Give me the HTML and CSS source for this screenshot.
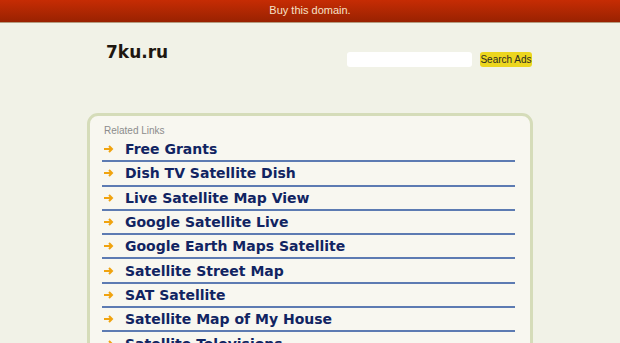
FILE: index.html
```html
<!DOCTYPE html>
<html lang="ru">

<head>
  <meta charset="UTF-8">
  <title>7ku.ru</title>
  <link rel="stylesheet" href="styles.css">
</head>

<body>
  <div class="topbar">Buy this domain.</div>

  <div class="header">
    <div class="logo">7ku.ru</div>
    <form class="search">
      <input type="text" class="search-input">
      <button type="button" class="search-button">Search Ads</button>
    </form>
  </div>

  <div class="links-box">
    <div class="links-title">Related Links</div>
    <ul class="links">
      <li><svg class="arrow" width="10" height="8" viewBox="0 0 10 8"><path d="M0 4h8M5 1l3 3-3 3" fill="none" stroke="#f0a30f" stroke-width="2"/></svg><a href="#">Free Grants</a></li>
      <li><svg class="arrow" width="10" height="8" viewBox="0 0 10 8"><path d="M0 4h8M5 1l3 3-3 3" fill="none" stroke="#f0a30f" stroke-width="2"/></svg><a href="#">Dish TV Satellite Dish</a></li>
      <li><svg class="arrow" width="10" height="8" viewBox="0 0 10 8"><path d="M0 4h8M5 1l3 3-3 3" fill="none" stroke="#f0a30f" stroke-width="2"/></svg><a href="#">Live Satellite Map View</a></li>
      <li><svg class="arrow" width="10" height="8" viewBox="0 0 10 8"><path d="M0 4h8M5 1l3 3-3 3" fill="none" stroke="#f0a30f" stroke-width="2"/></svg><a href="#">Google Satellite Live</a></li>
      <li><svg class="arrow" width="10" height="8" viewBox="0 0 10 8"><path d="M0 4h8M5 1l3 3-3 3" fill="none" stroke="#f0a30f" stroke-width="2"/></svg><a href="#">Google Earth Maps Satellite</a></li>
      <li><svg class="arrow" width="10" height="8" viewBox="0 0 10 8"><path d="M0 4h8M5 1l3 3-3 3" fill="none" stroke="#f0a30f" stroke-width="2"/></svg><a href="#">Satellite Street Map</a></li>
      <li><svg class="arrow" width="10" height="8" viewBox="0 0 10 8"><path d="M0 4h8M5 1l3 3-3 3" fill="none" stroke="#f0a30f" stroke-width="2"/></svg><a href="#">SAT Satellite</a></li>
      <li><svg class="arrow" width="10" height="8" viewBox="0 0 10 8"><path d="M0 4h8M5 1l3 3-3 3" fill="none" stroke="#f0a30f" stroke-width="2"/></svg><a href="#">Satellite Map of My House</a></li>
      <li><svg class="arrow" width="10" height="8" viewBox="0 0 10 8"><path d="M0 4h8M5 1l3 3-3 3" fill="none" stroke="#f0a30f" stroke-width="2"/></svg><a href="#">Satellite Televisions</a></li>
    </ul>
  </div>
</body>

</html>
```

FILE: styles.css
```css
body {
  margin: 0;
  background-color: #f1f2e7;
  font-family: "Liberation Sans", Arial, sans-serif;
  color: #333;
}

.topbar {
  height: 22px;
  line-height: 21px;
  text-align: center;
  font-size: 11px;
  color: #f6e2c8;
  background: linear-gradient(#c62c04, #992201);
  border-bottom: 1px solid #b59c80;
}

.header {
  width: 446px;
  margin: 0 auto;
  box-sizing: border-box;
  padding: 17px 1px 0 19px;
  height: 90px;
  display: flex;
  justify-content: space-between;
  align-items: flex-start;
}

.logo {
  font-family: "DejaVu Sans", Verdana, sans-serif;
  font-weight: bold;
  font-size: 17px;
  line-height: 24px;
  color: #1e1710;
}

.search {
  display: flex;
  gap: 8px;
  margin-top: 12px;
}

.search-input {
  width: 125px;
  height: 15px;
  box-sizing: border-box;
  border: none;
  border-radius: 3px;
  background: #fff;
  padding: 0 4px;
}

.search-button {
  width: 52px;
  height: 15px;
  padding: 0;
  border: none;
  border-radius: 3px;
  background-color: #ecd61e;
  color: #2a2a20;
  font-family: "Liberation Sans", Arial, sans-serif;
  font-size: 10px;
  line-height: 15px;
}

.links-box {
  width: 446px;
  margin: 0 auto;
  box-sizing: border-box;
  border: 3px solid #d5dcb9;
  border-radius: 11px;
  background-color: #f8f7f0;
  padding: 8px 15px 20px 12px;
}

.links-title {
  font-size: 10px;
  line-height: 14px;
  color: #8c8c8c;
  padding-left: 2px;
}

.links {
  list-style: none;
  margin: 0;
  padding: 0;
}

.links li {
  display: flex;
  align-items: center;
  height: 22.3px;
  border-bottom: 2px solid #5d7bb2;
}

.arrow {
  margin-left: 2px;
  margin-right: 11px;
  flex-shrink: 0;
}

.links a {
  font-family: "DejaVu Sans", Verdana, sans-serif;
  font-weight: bold;
  font-size: 14px;
  color: #112462;
  text-decoration: none;
}
```
